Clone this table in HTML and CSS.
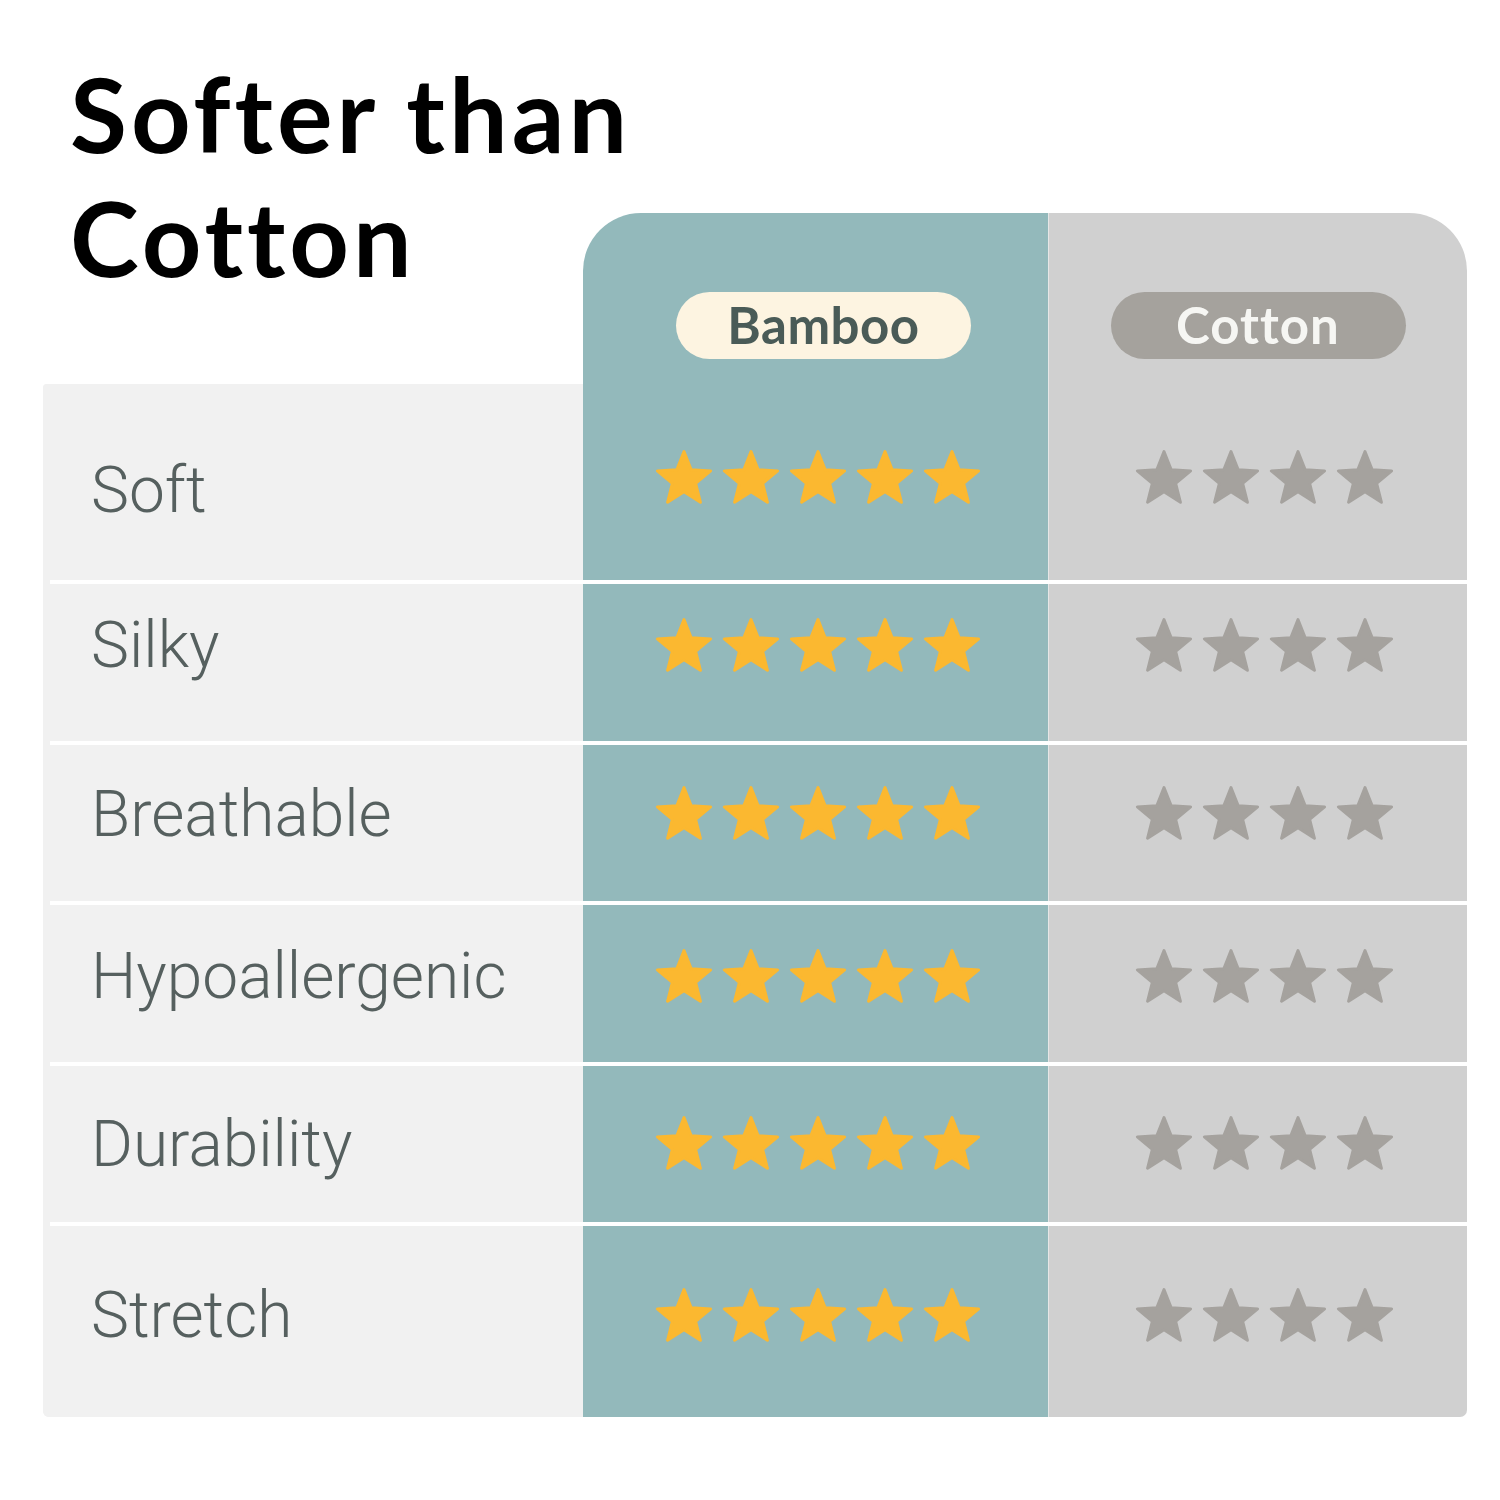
FILE: index.html
```html
<!DOCTYPE html>
<html lang="en">
<head>
<meta charset="utf-8">
<title>Softer than Cotton</title>
<link rel="stylesheet" href="styles.css">
</head>
<body>
<svg class="defs" width="0" height="0" aria-hidden="true">
  <symbol id="star" viewBox="0 0 24 24">
    <path d="M12 2.1 L14.7 8.88 L21.99 9.36 L16.37 14.02 L18.17 21.09 L12 17.2 L5.83 21.09 L7.63 14.02 L2.01 9.36 L9.3 8.88Z" stroke-width="1.1" stroke-linejoin="round"/>
  </symbol>
</svg>
<main class="sheet">
  <h1 class="title">Softer than<br>Cotton</h1>
  <div class="head head-bamboo"><span class="pill pill-bamboo">Bamboo</span></div>
  <div class="head head-cotton"><span class="pill pill-cotton">Cotton</span></div>

  <div class="tbody">
    <div class="row row-1">
      <div class="label">Soft</div>
      <div class="cell bamboo"><div class="stars gold"><svg><use href="#star"/></svg><svg><use href="#star"/></svg><svg><use href="#star"/></svg><svg><use href="#star"/></svg><svg><use href="#star"/></svg></div></div>
      <div class="cell cotton"><div class="stars grey"><svg><use href="#star"/></svg><svg><use href="#star"/></svg><svg><use href="#star"/></svg><svg><use href="#star"/></svg></div></div>
    </div>
    <div class="row row-2">
      <div class="label">Silky</div>
      <div class="cell bamboo"><div class="stars gold"><svg><use href="#star"/></svg><svg><use href="#star"/></svg><svg><use href="#star"/></svg><svg><use href="#star"/></svg><svg><use href="#star"/></svg></div></div>
      <div class="cell cotton"><div class="stars grey"><svg><use href="#star"/></svg><svg><use href="#star"/></svg><svg><use href="#star"/></svg><svg><use href="#star"/></svg></div></div>
    </div>
    <div class="row row-3">
      <div class="label">Breathable</div>
      <div class="cell bamboo"><div class="stars gold"><svg><use href="#star"/></svg><svg><use href="#star"/></svg><svg><use href="#star"/></svg><svg><use href="#star"/></svg><svg><use href="#star"/></svg></div></div>
      <div class="cell cotton"><div class="stars grey"><svg><use href="#star"/></svg><svg><use href="#star"/></svg><svg><use href="#star"/></svg><svg><use href="#star"/></svg></div></div>
    </div>
    <div class="row row-4">
      <div class="label">Hypoallergenic</div>
      <div class="cell bamboo"><div class="stars gold"><svg><use href="#star"/></svg><svg><use href="#star"/></svg><svg><use href="#star"/></svg><svg><use href="#star"/></svg><svg><use href="#star"/></svg></div></div>
      <div class="cell cotton"><div class="stars grey"><svg><use href="#star"/></svg><svg><use href="#star"/></svg><svg><use href="#star"/></svg><svg><use href="#star"/></svg></div></div>
    </div>
    <div class="row row-5">
      <div class="label">Durability</div>
      <div class="cell bamboo"><div class="stars gold"><svg><use href="#star"/></svg><svg><use href="#star"/></svg><svg><use href="#star"/></svg><svg><use href="#star"/></svg><svg><use href="#star"/></svg></div></div>
      <div class="cell cotton"><div class="stars grey"><svg><use href="#star"/></svg><svg><use href="#star"/></svg><svg><use href="#star"/></svg><svg><use href="#star"/></svg></div></div>
    </div>
    <div class="row row-6">
      <div class="label">Stretch</div>
      <div class="cell bamboo"><div class="stars gold"><svg><use href="#star"/></svg><svg><use href="#star"/></svg><svg><use href="#star"/></svg><svg><use href="#star"/></svg><svg><use href="#star"/></svg></div></div>
      <div class="cell cotton"><div class="stars grey"><svg><use href="#star"/></svg><svg><use href="#star"/></svg><svg><use href="#star"/></svg><svg><use href="#star"/></svg></div></div>
    </div>
  </div>
</main>
</body>
</html>
```
FILE: styles.css
```css
* { box-sizing: border-box; }

html, body {
  margin: 0;
  padding: 0;
  background: #ffffff;
}

.defs {
  position: absolute;
  width: 0;
  height: 0;
  overflow: hidden;
}

.sheet {
  display: grid;
  grid-template-columns: 540px 465px 419px;
  grid-template-rows: 162px 171px auto;
  padding: 51px 0 0 43px;
  width: 1500px;
}

.title {
  grid-column: 1;
  grid-row: 1 / 3;
  margin: 0;
  padding-left: 27px;
  font-family: "Lato", "Open Sans", sans-serif;
  font-weight: 700;
  font-size: 104px;
  line-height: 124px;
  color: #000000;
  white-space: nowrap;
  letter-spacing: 4px;
}

.head {
  grid-row: 2;
  display: flex;
  justify-content: center;
  align-items: flex-start;
  padding-top: 79px;
}

.head-bamboo {
  grid-column: 2;
  background: #93b9bb;
  border-top-left-radius: 58px;
  padding-left: 16px;
}

.head-cotton {
  grid-column: 3;
  background: #d0d0d0;
  border-top-right-radius: 58px;
  border-left: 1px solid #e6e6e6;
}

.pill {
  display: flex;
  align-items: center;
  justify-content: center;
  width: 295px;
  height: 67px;
  border-radius: 34px;
  font-family: "Lato", "Open Sans", sans-serif;
  font-weight: 700;
  font-size: 51px;
  line-height: 1;
  padding-bottom: 2px;
}

.pill-bamboo {
  background: #fdf4e1;
  color: #4a5b57;
  letter-spacing: 0.5px;
}

.pill-cotton {
  background: #a5a29d;
  color: #f6f6f3;
  letter-spacing: 1px;
}

.tbody {
  grid-column: 1 / 4;
  grid-row: 3;
  display: flex;
  flex-direction: column;
  gap: 4px;
  background: linear-gradient(to right, #f1f1f1 7px, transparent 7px);
  border-radius: 4px 0 0 6px;
}

.row {
  display: grid;
  grid-template-columns: 540px 465px 419px;
}

.row-1 { height: 196px; }
.row-2 { height: 157px; }
.row-3 { height: 156px; }
.row-4 { height: 157px; }
.row-5 { height: 156px; }
.row-6 { height: 191px; }

.label {
  display: flex;
  align-items: center;
  background: #f1f1f1;
  padding-left: 48px;
  font-family: "Roboto", "Noto Sans", sans-serif;
  font-weight: 300;
  font-size: 64px;
  color: #56605f;
}

.cell {
  display: flex;
  align-items: center;
}

.bamboo {
  background: #93b9bb;
  justify-content: center;
  padding-left: 4px;
}

.cotton {
  background: #d0d0d0;
  justify-content: center;
  padding-left: 13px;
  border-left: 1px solid #e6e6e6;
}

.row-1 .label { padding-top: 16px; }
.row-1 .cell { padding-bottom: 8px; }
.row-2 .label, .row-2 .cell { padding-bottom: 34px; }
.row-3 .label, .row-3 .cell { padding-bottom: 18px; }
.row-4 .label, .row-4 .cell { padding-bottom: 14px; }
.row-6 .label, .row-6 .cell { padding-bottom: 12px; }

.row-1 .label { border-top-left-radius: 4px; }
.row-6 .label { border-bottom-left-radius: 6px; }
.row-6 .cotton { border-bottom-right-radius: 7px; }

.stars {
  display: flex;
  gap: 3px;
}

.stars svg {
  width: 64px;
  height: 64px;
}

.gold { fill: #fbb830; stroke: #fbb830; }
.grey { fill: #a5a29e; stroke: #a5a29e; }
```
